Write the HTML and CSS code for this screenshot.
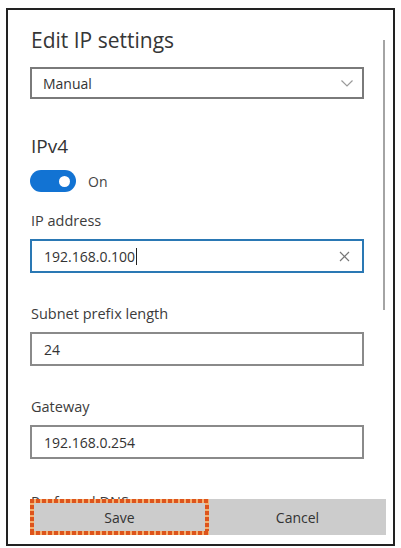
FILE: index.html
```html
<!DOCTYPE html>
<html lang="en">
<head>
<meta charset="utf-8">
<title>Edit IP settings</title>
<link rel="stylesheet" href="styles.css">
</head>
<body>
<div class="dialog">
  <div class="scroll-area">
    <div class="form">
      <h1 class="title">Edit IP settings</h1>
      <div class="select">
        <span>Manual</span>
        <svg class="chevron" width="12" height="7" viewBox="0 0 12 7"><path d="M0.5 0.5 L6 6 L11.5 0.5" fill="none" stroke="#9a9a9a" stroke-width="1.2"/></svg>
      </div>

      <h2 class="section">IPv4</h2>
      <div class="toggle-row">
        <span class="toggle"><span class="knob"></span></span>
        <span class="toggle-label">On</span>
      </div>

      <div class="field first">
        <label class="label">IP address</label>
        <div class="input focused">
          <span class="value">192.168.0.100</span><span class="caret"></span>
          <svg class="clear" width="11" height="11" viewBox="0 0 11 11"><path d="M1 1 L10 10 M10 1 L1 10" stroke="#777" stroke-width="1.2"/></svg>
        </div>
      </div>

      <div class="field">
        <label class="label">Subnet prefix length</label>
        <div class="input"><span class="value">24</span></div>
      </div>

      <div class="field">
        <label class="label">Gateway</label>
        <div class="input"><span class="value">192.168.0.254</span></div>
      </div>

      <div class="field last">
        <label class="label">Preferred DNS</label>
        <div class="input"><span class="value"></span></div>
      </div>
    </div>
    <div class="scrollbar"></div>
  </div>
  <div class="actions">
    <div class="btn save">Save</div>
    <div class="btn cancel">Cancel</div>
  </div>
</div>
</body>
</html>
```

FILE: styles.css
```css
html, body {
  margin: 0;
  padding: 0;
  background: #ffffff;
}

body {
  font-family: "Open Sans", "Noto Sans", sans-serif;
  color: #3a3a3a;
}

.dialog {
  margin: 8px 0 0 6px;
  width: 385px;
  height: 534px;
  border: 2px solid #222222;
  display: flex;
  flex-direction: column;
  background: #ffffff;
}

.scroll-area {
  height: 489px;
  flex: none;
  overflow: hidden;
  display: flex;
  flex-direction: row;
}

.form {
  width: 334px;
  margin-left: 22px;
  padding-top: 16px;
}

.scrollbar {
  width: 2px;
  height: 270px;
  margin: 30px 0 0 19px;
  background: #a4a4a4;
}

.title {
  margin: 0;
  font-size: 21px;
  line-height: 28px;
  font-weight: 400;
  color: #363636;
  padding-left: 1px;
}

.select {
  margin-top: 13px;
  height: 28px;
  border: 2px solid #7a7a7a;
  display: flex;
  align-items: center;
  justify-content: space-between;
  padding: 0 9px 0 11px;
  font-size: 14px;
  color: #333333;
}

.section {
  margin: 34px 0 0 0;
  font-size: 19px;
  line-height: 26px;
  font-weight: 400;
  color: #333333;
  padding-left: 1px;
}

.toggle-row {
  margin-top: 11px;
  height: 22px;
  display: flex;
  align-items: center;
}

.toggle {
  width: 46px;
  height: 22px;
  border-radius: 11px;
  background: #1273d3;
  position: relative;
  display: block;
}

.knob {
  position: absolute;
  right: 6px;
  top: 6px;
  width: 11px;
  height: 11px;
  border-radius: 50%;
  background: #ffffff;
}

.toggle-label {
  margin-left: 12px;
  font-size: 14px;
  color: #444444;
}

.field {
  margin-top: 31px;
}

.field.first {
  margin-top: 19px;
}

.field.last {
  margin-top: 33px;
}

.label {
  display: block;
  font-size: 14.5px;
  line-height: 20px;
  color: #3c3c3c;
  padding-left: 1px;
}

.input {
  margin-top: 8px;
  height: 30px;
  border: 2px solid #8a8a8a;
  display: flex;
  align-items: center;
  padding: 0 12px;
  font-size: 14px;
  color: #333333;
}

.input.focused {
  border-color: #2a78b4;
}

.caret {
  width: 1px;
  height: 17px;
  background: #222222;
  margin-left: 1px;
}

.clear {
  margin-left: auto;
  margin-right: 0;
}

.actions {
  margin: 0 0 0 22px;
  width: 356px;
  height: 36px;
  flex: none;
  background: #cccccc;
  display: flex;
}

.btn {
  display: flex;
  align-items: center;
  justify-content: center;
  font-size: 14px;
  color: #333333;
}

.save {
  width: 179px;
  position: relative;
}

/* dotted focus ring drawn as square dots */
.save::after {
  content: "";
  position: absolute;
  inset: 0;
  background:
    repeating-linear-gradient(90deg, #dd541c 0 4px, #f4b070 4px 6px) top / 100% 4px no-repeat,
    repeating-linear-gradient(90deg, #dd541c 0 4px, #f4b070 4px 6px) bottom / 100% 4px no-repeat,
    repeating-linear-gradient(180deg, #dd541c 0 4px, #f4b070 4px 6px) left / 4px 100% no-repeat,
    repeating-linear-gradient(180deg, #dd541c 0 4px, #f4b070 4px 6px) right / 4px 100% no-repeat;
}

.cancel {
  flex: 1;
}
```
